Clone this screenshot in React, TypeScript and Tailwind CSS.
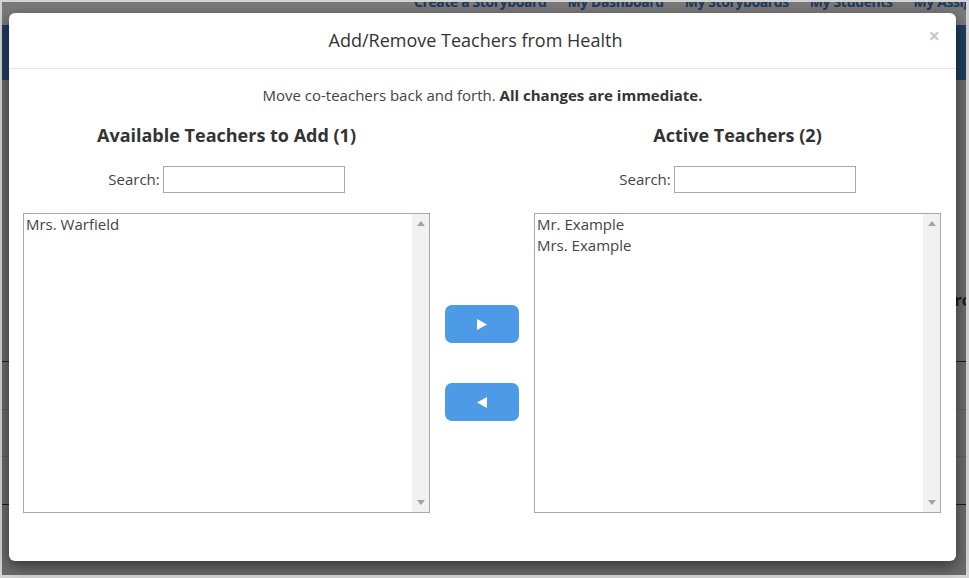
import React from 'react';

const font = { fontFamily: '"Open Sans", "Noto Sans", sans-serif' };

const navLinks = ['Create a Storyboard', 'My Dashboard', 'My Storyboards', 'My Students', 'My Assignments'];

const ListBox: React.FC<{ items: string[] }> = ({ items }) => (
    <div className="flex h-[300px] border border-[#a9a9a9] bg-white">
        <div className="flex-1 px-[2px] text-[15px] leading-[21px] text-[#444]">
            {items.map((name) => (
                <div key={name}>{name}</div>
            ))}
        </div>
        {/* Scrollbar */}
        <div className="w-[17px] bg-[#f1f1f1] flex flex-col items-center justify-between py-[7px]">
            <svg width="8" height="5" viewBox="0 0 8 5"><path d="M0 5 L4 0 L8 5 Z" fill="#a3a3a3" /></svg>
            <svg width="8" height="5" viewBox="0 0 8 5"><path d="M0 0 L8 0 L4 5 Z" fill="#a3a3a3" /></svg>
        </div>
    </div>
);

const SearchRow: React.FC = () => (
    <div className="flex items-center justify-center gap-[3px] mt-[17px] text-[15px] text-[#444]">
        <span>Search:</span>
        <div className="w-[182px] h-[27px] border border-[#a9a9a9] bg-white" />
    </div>
);

export default function App() {
    return (
        <div className="relative w-[969px] h-[578px] overflow-hidden bg-[#d4d4d4]" style={font}>
            {/* Page behind the dimmed overlay */}
            <div className="absolute left-[2px] top-[2px] right-[3px] bottom-[3px] flex flex-col bg-[#6b6b6b] overflow-hidden">
                <div className="h-[23px] shrink-0 bg-[#7a7a7a] flex gap-[21px] pl-[412px] whitespace-nowrap overflow-hidden">
                    {navLinks.map((l) => (
                        <span key={l} className="text-[14px] font-bold tracking-[-0.4px] text-[#1c3a5a] leading-[14px] mt-[-7px]">
                            {l}
                        </span>
                    ))}
                </div>
                <div className="h-[55px] shrink-0 bg-[#1f3e5f]" />
                <div className="h-[282px] shrink-0 border-b border-[#1c1c1c] flex justify-end pt-[210px]">
                    <span className="text-[16px] leading-[20px] font-bold text-[#1a1a1a] mr-[-4px]">rc</span>
                </div>
                <div className="h-[48px] shrink-0 border-b border-[#5e5e5e]" />
                <div className="h-[47px] shrink-0 border-b border-[#5e5e5e]" />
                <div className="h-[48px] shrink-0 border-b border-[#1c1c1c]" />
            </div>

            {/* Modal */}
            <div className="absolute left-[9px] top-[13px] w-[947px] h-[548px] bg-white rounded-[6px] shadow-[0_5px_15px_rgba(0,0,0,0.5)] flex flex-col">
                <div className="relative h-[56px] border-b border-[#e5e5e5] flex items-center justify-center pr-[14px]">
                    <span className="text-[18px] text-[#333]">Add/Remove Teachers from Health</span>
                    <span className="absolute right-[16px] top-[8px] text-[20px] font-bold text-[#c8c8c8]">×</span>
                </div>

                <div className="px-[14px] pt-[16px]">
                    <div className="text-center text-[15px] leading-[20px] text-[#444]">
                        Move co-teachers back and forth. <b className="text-[#333]">All changes are immediate.</b>
                    </div>

                    <div className="grid grid-cols-[407px_104px_407px] mt-[16px]">
                        <div className="flex flex-col">
                            <h3 className="text-center text-[18px] font-bold leading-[28px] text-[#333]">Available Teachers to Add (1)</h3>
                            <SearchRow />
                        </div>
                        <div />
                        <div className="flex flex-col">
                            <h3 className="text-center text-[18px] font-bold leading-[28px] text-[#333]">Active Teachers (2)</h3>
                            <SearchRow />
                        </div>

                        <div className="mt-[20px]">
                            <ListBox items={['Mrs. Warfield']} />
                        </div>
                        <div className="mt-[20px] flex flex-col items-center justify-center gap-[40px]">
                            <button className="w-[74px] h-[38px] rounded-[7px] bg-[#4d9be6] flex items-center justify-center">
                                <svg width="10" height="11" viewBox="0 0 10 11"><path d="M0 0 L10 5.5 L0 11 Z" fill="#fff" /></svg>
                            </button>
                            <button className="w-[74px] h-[38px] rounded-[7px] bg-[#4d9be6] flex items-center justify-center">
                                <svg width="10" height="11" viewBox="0 0 10 11"><path d="M10 0 L0 5.5 L10 11 Z" fill="#fff" /></svg>
                            </button>
                        </div>
                        <div className="mt-[20px]">
                            <ListBox items={['Mr. Example', 'Mrs. Example']} />
                        </div>
                    </div>
                </div>
            </div>
        </div>
    );
}
